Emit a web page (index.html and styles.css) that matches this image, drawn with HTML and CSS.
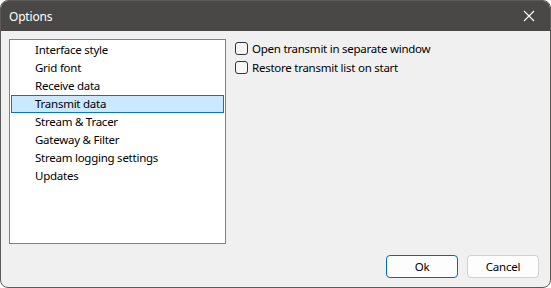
FILE: index.html
```html
<!DOCTYPE html>
<html>
<head>
<meta charset="utf-8">
<link rel="stylesheet" href="styles.css">
</head>
<body>
<div class="window">
  <div class="titlebar">
    <span class="title">Options</span>
    <svg class="close" width="12" height="12" viewBox="0 0 12 12"><path d="M1 1 L11 11 M11 1 L1 11" stroke="#ffffff" stroke-width="1.1" fill="none"/></svg>
  </div>
  <div class="content">
    <div class="main">
      <ul class="list">
        <li>Interface style</li>
        <li>Grid font</li>
        <li>Receive data</li>
        <li class="selected">Transmit data</li>
        <li>Stream &amp; Tracer</li>
        <li>Gateway &amp; Filter</li>
        <li>Stream logging settings</li>
        <li>Updates</li>
      </ul>
      <div class="options">
        <label class="check"><span class="box"></span>Open transmit in separate window</label>
        <label class="check"><span class="box"></span>Restore transmit list on start</label>
      </div>
    </div>
    <div class="footer">
      <button class="btn primary">Ok</button>
      <button class="btn">Cancel</button>
    </div>
  </div>
</div>
</body>
</html>
```
FILE: styles.css
```css
html, body {
  margin: 0;
  padding: 0;
  background: #ffffff;
}
body {
  font-family: "Noto Sans", "Open Sans", sans-serif;
  font-size: 12px;
  color: #000;
}
.window {
  width: 551px;
  height: 288px;
  box-sizing: border-box;
  border: 1px solid #5c5b59;
  border-radius: 8px;
  overflow: hidden;
  display: flex;
  flex-direction: column;
  background: #f0f0f0;
}
.titlebar {
  height: 30px;
  background: #4a4846;
  color: #fff;
  display: flex;
  align-items: center;
  justify-content: space-between;
  padding: 0 15px 0 8px;
  flex: none;
}
.title {
  font-size: 12px;
  letter-spacing: -0.2px;
}
.close {
  display: block;
}
.content {
  flex: 1;
  display: flex;
  flex-direction: column;
  padding: 8px 11px 9px 8px;
}
.main {
  flex: 1;
  display: flex;
  gap: 9px;
}
.list {
  list-style: none;
  margin: 0;
  padding: 1px 1px;
  width: 217px;
  height: 205px;
  box-sizing: border-box;
  border: 1px solid #828282;
  background: #fff;
}
.list li {
  height: 18px;
  line-height: 15px;
  padding-left: 23px;
  box-sizing: border-box;
  border: 1px solid transparent;
  font-size: 11.5px;
  letter-spacing: -0.25px;
  white-space: nowrap;
}
.list li.selected {
  background: #cce8ff;
  border-color: #0078d7;
}
.options {
  display: flex;
  flex-direction: column;
  gap: 6px;
  padding-top: 3px;
}
.check {
  display: flex;
  align-items: center;
  gap: 4px;
  height: 13px;
  font-size: 11.5px;
  letter-spacing: -0.25px;
  white-space: nowrap;
}
.box {
  width: 13px;
  height: 13px;
  box-sizing: border-box;
  border: 1px solid #333;
  border-radius: 3px;
  background: #f7f7f7;
  flex: none;
}
.footer {
  display: flex;
  justify-content: flex-end;
  gap: 9px;
}
.btn {
  width: 72px;
  height: 23px;
  box-sizing: border-box;
  border: 1px solid #d0d0d0;
  border-radius: 4px;
  background: #fdfdfd;
  font-family: inherit;
  font-size: 11.5px;
  letter-spacing: -0.2px;
  color: #000;
  padding: 0;
}
.btn.primary {
  border-color: #0067c0;
}
```
